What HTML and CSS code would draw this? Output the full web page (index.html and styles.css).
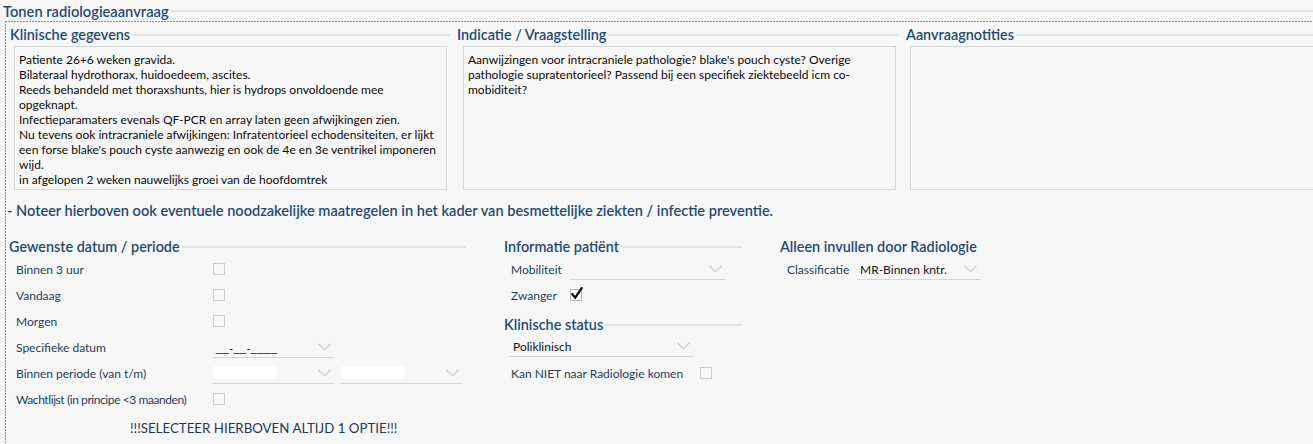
FILE: index.html
```html
<!DOCTYPE html>
<html lang="nl">
<head>
<meta charset="utf-8">
<title>Tonen radiologieaanvraag</title>
<link rel="stylesheet" href="styles.css">
</head>
<body>
<div class="page">
  <div class="legend title"><span class="legend-text">Tonen radiologieaanvraag</span><span class="legend-line"></span></div>
  <div class="outer">
    <div class="notes">
      <div class="note-col">
        <div class="legend"><span class="legend-text">Klinische gegevens</span><span class="legend-line"></span></div>
        <div class="textbox">Patiente 26+6 weken gravida.<br>Bilateraal hydrothorax, huidoedeem, ascites.<br>Reeds behandeld met thoraxshunts, hier is hydrops onvoldoende mee<br>opgeknapt.<br>Infectieparamaters evenals QF-PCR en array laten geen afwijkingen zien.<br>Nu tevens ook intracraniele afwijkingen: Infratentorieel echodensiteiten, er lijkt<br>een forse blake's pouch cyste aanwezig en ook de 4e en 3e ventrikel imponeren<br>wijd.<br>in afgelopen 2 weken nauwelijks groei van de hoofdomtrek</div>
      </div>
      <div class="note-col">
        <div class="legend"><span class="legend-text">Indicatie / Vraagstelling</span><span class="legend-line"></span></div>
        <div class="textbox textbox-mid">Aanwijzingen voor intracraniele pathologie? blake's pouch cyste? Overige<br>pathologie supratentorieel? Passend bij een specifiek ziektebeeld icm co-<br>mobiditeit?</div>
      </div>
      <div class="note-col note-col-last">
        <div class="legend"><span class="legend-text">Aanvraagnotities</span><span class="legend-line"></span></div>
        <div class="textbox textbox-open"></div>
      </div>
    </div>

    <p class="notice">- Noteer hierboven ook eventuele noodzakelijke maatregelen in het kader van besmettelijke ziekten / infectie preventie.</p>

    <div class="form">
      <div class="fs fs-date">
        <div class="legend"><span class="legend-text">Gewenste datum / periode</span><span class="legend-line"></span></div>
        <div class="rows">
          <div class="row"><span class="label">Binnen 3 uur</span><span class="check"></span></div>
          <div class="row"><span class="label">Vandaag</span><span class="check"></span></div>
          <div class="row"><span class="label">Morgen</span><span class="check"></span></div>
          <div class="row">
            <span class="label">Specifieke datum</span>
            <span class="select sel-date"><span class="sel-value mask">__-__-____</span><svg class="chev" width="13" height="8" viewBox="0 0 13 8"><polyline points="0.5,0.8 6.5,6.8 12.5,0.8" fill="none" stroke="#d0d0d0" stroke-width="1.3"/></svg></span>
          </div>
          <div class="row">
            <span class="label">Binnen periode (van t/m)</span>
            <span class="select sel-date"><span class="white-field"></span><svg class="chev" width="13" height="8" viewBox="0 0 13 8"><polyline points="0.5,0.8 6.5,6.8 12.5,0.8" fill="none" stroke="#d0d0d0" stroke-width="1.3"/></svg></span>
            <span class="select sel-date sel-second"><span class="white-field"></span><svg class="chev" width="13" height="8" viewBox="0 0 13 8"><polyline points="0.5,0.8 6.5,6.8 12.5,0.8" fill="none" stroke="#d0d0d0" stroke-width="1.3"/></svg></span>
          </div>
          <div class="row"><span class="label label-tight">Wachtlijst (in principe &lt;3 maanden)</span><span class="check"></span></div>
        </div>
        <p class="warning">!!!SELECTEER HIERBOVEN ALTIJD 1 OPTIE!!!</p>
      </div>

      <div class="fs fs-patient">
        <div class="legend"><span class="legend-text">Informatie patiënt</span><span class="legend-line"></span></div>
        <div class="prow">
          <span class="plabel">Mobiliteit</span>
          <span class="select sel-mob"><span class="sel-value"></span><svg class="chev" width="13" height="8" viewBox="0 0 13 8"><polyline points="0.5,0.8 6.5,6.8 12.5,0.8" fill="none" stroke="#d0d0d0" stroke-width="1.3"/></svg></span>
        </div>
        <div class="prow">
          <span class="plabel">Zwanger</span>
          <span class="check checked"><svg width="14" height="14" viewBox="0 0 14 14"><path d="M2.3 7.2 L5.2 10.6 L11.6 1.2" fill="none" stroke="#111" stroke-width="2.2" stroke-linecap="square" stroke-linejoin="miter"/></svg></span>
        </div>
        <div class="legend legend-sub"><span class="legend-text">Klinische status</span><span class="legend-line"></span></div>
        <div class="prow prow-status">
          <span class="select sel-status"><span class="sel-value">Poliklinisch</span><svg class="chev" width="13" height="8" viewBox="0 0 13 8"><polyline points="0.5,0.8 6.5,6.8 12.5,0.8" fill="none" stroke="#d0d0d0" stroke-width="1.3"/></svg></span>
        </div>
        <div class="prow">
          <span class="plabel plabel-wide">Kan NIET naar Radiologie komen</span>
          <span class="check"></span>
        </div>
      </div>

      <div class="fs fs-radio">
        <div class="legend"><span class="legend-text">Alleen invullen door Radiologie</span><span class="legend-line"></span></div>
        <div class="prow">
          <span class="plabel plabel-class">Classificatie</span>
          <span class="select sel-class"><span class="sel-value">MR-Binnen kntr.</span><svg class="chev" width="13" height="8" viewBox="0 0 13 8"><polyline points="0.5,0.8 6.5,6.8 12.5,0.8" fill="none" stroke="#d0d0d0" stroke-width="1.3"/></svg></span>
        </div>
      </div>
    </div>
  </div>
</div>
</body>
</html>
```

FILE: styles.css
```css
html, body {
  margin: 0;
  padding: 0;
  background: #f7f7f7;
  overflow: hidden;
}

body {
  font-family: "Lato", "Noto Sans", "Liberation Sans", sans-serif;
  font-size: 12px;
  color: #000;
}

.page {
  width: 1313px;
  height: 444px;
  overflow: hidden;
}

/* legend heading with trailing line */
.legend {
  display: flex;
  align-items: center;
  height: 20px;
}

.legend-text {
  font-size: 14.4px;
  font-weight: 600;
  color: #1f4b75;
  white-space: nowrap;
}

.legend-line {
  flex: 1;
  height: 2px;
  background: #e4e4e4;
  margin-left: 2px;
  margin-top: 1px;
}

.title {
  padding-left: 3px;
  height: 21px;
}

.title .legend-text {
  font-size: 14.7px;
}

.outer {
  margin-left: 5px;
  padding: 3px 0 0 4px;
  height: 430px;
  background-image:
    repeating-linear-gradient(to right, #8c8c8c 0 2px, transparent 2px 3px),
    repeating-linear-gradient(to bottom, #8c8c8c 0 2px, transparent 2px 3px);
  background-size: 100% 1px, 1px 100%;
  background-repeat: no-repeat;
  background-position: 0 0, 0 0;
  box-sizing: border-box;
}

.notes {
  display: grid;
  grid-template-columns: 441px 443px 460px;
  column-gap: 6px;
}

.note-col .legend {
  padding-left: 1px;
}

.textbox {
  margin: 2px 3px 0 5px;
  border: 1px solid #d7d7d7;
  padding: 5px 4px 0 4px;
  line-height: 15px;
  font-size: 12px;
  color: #0a0a0a;
  white-space: nowrap;
  box-sizing: border-box;
  height: 144px;
}

.textbox-mid {
  margin-left: 7px;
}

.textbox-open {
  margin-right: -20px;
}

.notice {
  margin: 12px 0 0 -2px;
  line-height: 18px;
  font-size: 14.55px;
  font-weight: 600;
  color: #1f4b75;
  white-space: nowrap;
}

.form {
  display: flex;
  margin-top: 16px;
}

.fs-date {
  width: 457px;
}

.fs-patient {
  width: 238px;
  margin-left: 38px;
}

.fs-radio {
  width: 202px;
  margin-left: 38px;
}

.fs-radio .legend-line {
  background: transparent;
}

.rows {
  padding-left: 7px;
}

.row {
  display: flex;
  align-items: center;
  height: 26px;
}

.label {
  flex: none;
  width: 197px;
  min-width: 0;
  color: #243c5e;
  white-space: nowrap;
}

.label-tight {
  letter-spacing: -0.42px;
}

.check {
  width: 12px;
  height: 12px;
  border: 1px solid #cdcdcd;
  box-sizing: border-box;
  background: #f7f7f7;
  position: relative;
  flex: none;
}

.check.checked {
  border-color: #b9b9b9;
}

.check.checked svg {
  position: absolute;
  left: -1px;
  top: -3px;
}

.select {
  display: flex;
  align-items: center;
  justify-content: space-between;
  height: 20px;
  border-bottom: 1px solid #d6d6d6;
  box-sizing: border-box;
  margin-top: 2px;
}

.chev {
  flex: none;
  margin-right: 3px;
  margin-top: -2px;
}

.sel-date {
  width: 121px;
}

.sel-second {
  margin-left: 7px;
}

.sel-value {
  color: #111;
  white-space: nowrap;
}

.mask {
  font-family: "Liberation Sans", sans-serif;
  font-size: 11px;
  letter-spacing: 0.5px;
  padding-left: 3px;
}

.white-field {
  width: 63px;
  height: 13px;
  background: #fff;
  margin-left: 1px;
  margin-top: -3px;
}

.warning {
  margin: 8px 0 0 121px;
  line-height: 16px;
  font-size: 13.3px;
  color: #23395a;
}

.prow {
  display: flex;
  align-items: center;
  height: 26px;
  padding-left: 7px;
}

.plabel {
  flex: none;
  width: 59px;
  color: #243c5e;
  white-space: nowrap;
}

.plabel-wide {
  width: 189px;
}

.plabel-class {
  width: 70px;
}

.sel-mob {
  width: 155px;
}

.legend-sub {
  margin-top: 6px;
}

.prow-status {
  padding-left: 5px;
  height: 26px;
  align-items: flex-start;
}

.sel-status {
  width: 184px;
  margin-top: 3px;
}

.sel-status .sel-value {
  padding-left: 4px;
}

.sel-class {
  width: 123px;
}

.sel-class .sel-value {
  padding-left: 3px;
}
```
